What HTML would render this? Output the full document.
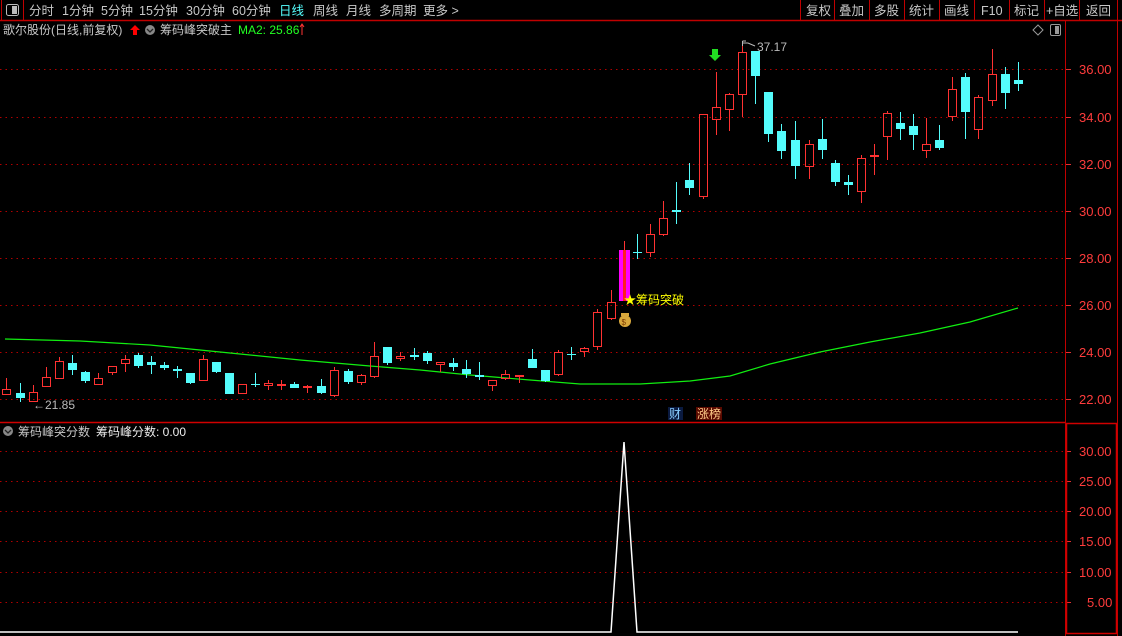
<!DOCTYPE html>
<html><head><meta charset="utf-8"><style>
html,body{margin:0;padding:0;background:#000;width:1122px;height:636px;overflow:hidden}
svg{display:block;font-family:"Liberation Sans","Noto Sans CJK SC",sans-serif}
</style></head><body>
<svg id="s" width="1122" height="636" viewBox="0 0 1122 636" xmlns="http://www.w3.org/2000/svg">
<rect width="1122" height="636" fill="#000"/>
<line x1="0" y1="20.5" x2="1122" y2="20.5" stroke="#c00000" stroke-width="1.5"/>
<line x1="23.5" y1="0" x2="23.5" y2="20" stroke="#c00000"/>
<line x1="1.5" y1="0" x2="1.5" y2="20" stroke="#c00000"/>
<rect x="6.5" y="4.5" width="12" height="11" rx="2" fill="none" stroke="#bbb"/>
<rect x="12" y="6" width="5" height="8" fill="#bbb"/>
<g font-size="12.5" fill="#c8c8c8">
<text x="29" y="15">分时</text><text x="62" y="15">1分钟</text><text x="101" y="15">5分钟</text>
<text x="139" y="15">15分钟</text><text x="186" y="15">30分钟</text><text x="232" y="15">60分钟</text>
<text x="279" y="15" fill="#5ff">日线</text><text x="313" y="15">周线</text><text x="346" y="15">月线</text>
<text x="379" y="15">多周期</text><text x="423" y="15">更多 &gt;</text>
<text x="806" y="15">复权</text><text x="839" y="15">叠加</text><text x="874" y="15">多股</text>
<text x="909" y="15">统计</text><text x="944" y="15">画线</text><text x="981" y="15">F10</text>
<text x="1014" y="15">标记</text><text x="1046" y="15">+自选</text><text x="1086" y="15">返回</text>
</g>
<g stroke="#c00000">
<line x1="800.5" y1="0" x2="800.5" y2="20"/><line x1="834.5" y1="0" x2="834.5" y2="20"/>
<line x1="869.5" y1="0" x2="869.5" y2="20"/><line x1="904.5" y1="0" x2="904.5" y2="20"/>
<line x1="939.5" y1="0" x2="939.5" y2="20"/><line x1="974.5" y1="0" x2="974.5" y2="20"/>
<line x1="1009.5" y1="0" x2="1009.5" y2="20"/><line x1="1044.5" y1="0" x2="1044.5" y2="20"/>
<line x1="1079.5" y1="0" x2="1079.5" y2="20"/><line x1="1117.5" y1="0" x2="1117.5" y2="636"/>
<line x1="1065.5" y1="20" x2="1065.5" y2="636"/>
</g>
<g font-size="12">
<text x="3" y="34" fill="#c8c8c8">歌尔股份(日线,前复权)</text>
<path d="M135 25 L140 30 L137 30 L137 35 L133 35 L133 30 L130 30Z" fill="#f00"/>
<circle cx="150" cy="30" r="5" fill="#888"/><path d="M147 29 L150 32 L153 29" stroke="#222" fill="none" stroke-width="1.3"/>
<text x="160" y="34" fill="#c8c8c8">筹码峰突破主</text>
<text x="238" y="34" fill="#2f2">MA2: 25.86</text>
<path d="M302 24 L302 35 M300 27 L302 24 L304 27" stroke="#f33" fill="none"/>
</g>
<path d="M1038 25 L1043 30 L1038 35 L1033 30Z" fill="none" stroke="#999"/>
<rect x="1050.5" y="24.5" width="10" height="11" rx="1.5" fill="none" stroke="#999"/><rect x="1055" y="26" width="4" height="8" fill="#999"/>
<g stroke="#b00000" stroke-dasharray="1.5 4">
<line x1="0" y1="69.5" x2="1065" y2="69.5"/><line x1="0" y1="117.5" x2="1065" y2="117.5"/>
<line x1="0" y1="164.5" x2="1065" y2="164.5"/><line x1="0" y1="211.5" x2="1065" y2="211.5"/>
<line x1="0" y1="258.5" x2="1065" y2="258.5"/><line x1="0" y1="305.5" x2="1065" y2="305.5"/>
<line x1="0" y1="352.5" x2="1065" y2="352.5"/><line x1="0" y1="399.5" x2="1065" y2="399.5"/>
<line x1="0" y1="451.5" x2="1065" y2="451.5"/><line x1="0" y1="481.5" x2="1065" y2="481.5"/>
<line x1="0" y1="511.5" x2="1065" y2="511.5"/><line x1="0" y1="541.5" x2="1065" y2="541.5"/>
<line x1="0" y1="572.5" x2="1065" y2="572.5"/><line x1="0" y1="602.5" x2="1065" y2="602.5"/>
</g>
<g font-size="13" fill="#ff3c3c">
<text x="1079" y="74">36.00</text><text x="1079" y="122">34.00</text><text x="1079" y="169">32.00</text>
<text x="1079" y="216">30.00</text><text x="1079" y="263">28.00</text><text x="1079" y="310">26.00</text>
<text x="1079" y="357">24.00</text><text x="1079" y="404">22.00</text>
<text x="1079" y="456">30.00</text><text x="1079" y="486">25.00</text><text x="1079" y="516">20.00</text>
<text x="1079" y="546">15.00</text><text x="1079" y="577">10.00</text><text x="1087" y="607">5.00</text>
</g>
<g stroke="#e03030">
<line x1="1066" y1="69.5" x2="1071" y2="69.5"/><line x1="1066" y1="117.5" x2="1071" y2="117.5"/>
<line x1="1066" y1="164.5" x2="1071" y2="164.5"/><line x1="1066" y1="211.5" x2="1071" y2="211.5"/>
<line x1="1066" y1="258.5" x2="1071" y2="258.5"/><line x1="1066" y1="305.5" x2="1071" y2="305.5"/>
<line x1="1066" y1="352.5" x2="1071" y2="352.5"/><line x1="1066" y1="399.5" x2="1071" y2="399.5"/>
<line x1="1066" y1="451.5" x2="1071" y2="451.5"/><line x1="1066" y1="481.5" x2="1071" y2="481.5"/>
<line x1="1066" y1="511.5" x2="1071" y2="511.5"/><line x1="1066" y1="541.5" x2="1071" y2="541.5"/>
<line x1="1066" y1="572.5" x2="1071" y2="572.5"/><line x1="1066" y1="602.5" x2="1071" y2="602.5"/>
</g>
<line x1="0" y1="422.5" x2="1065" y2="422.5" stroke="#d00000" stroke-width="1.5"/>
<rect x="1066.5" y="423.5" width="50" height="210" fill="none" stroke="#d00000" stroke-width="1.5"/>
<circle cx="8" cy="431" r="5" fill="#888"/><path d="M5 430 L8 433 L11 430" stroke="#222" fill="none" stroke-width="1.3"/>
<text x="18" y="436" font-size="12" fill="#c8c8c8">筹码峰突分数</text>
<text x="96" y="436" font-size="12" fill="#eee">筹码峰分数: 0.00</text>
<polyline fill="none" stroke="#1e1" stroke-width="1.2" points="5,339 80,341 150,345 230,353 300,360 370,366 420,370 470,375 530,380 580,384 640,384 690,381 730,376 770,364 820,352 870,342 920,333 970,322 1018,308"/>
<g id="c"></g>
<polyline fill="none" stroke="#fff" stroke-width="1.5" points="0,632 611,632 624,442 637,632 1018,632"/>
<text x="757" y="51" font-size="12" fill="#bbb">37.17</text>
<path d="M742.5 41 L742.5 46 M742.5 41 L746 41 M743 43 L748 43 L755 46" stroke="#bbb" fill="none"/>
<text x="33" y="409" font-size="12" fill="#bbb">←21.85</text>
<path d="M712 49 L718 49 L718 55 L721 55 L715 61 L709 55 L712 55Z" fill="#2d2"/>
<text x="624" y="304" font-size="12" fill="#ff0">★筹码突破</text>
<circle cx="625" cy="321" r="6" fill="#d9a83c"/><rect x="621" y="313" width="8" height="3" fill="#d9a83c"/>
<text x="621.5" y="325" font-size="8" fill="#7a3a00">$</text>
<rect x="668" y="407" width="15" height="13" fill="#0a1a40"/><text x="669" y="418" font-size="12" fill="#8cf">财</text>
<rect x="696" y="407" width="26" height="13" fill="#5a0a00"/><text x="697" y="418" font-size="12" fill="#fc8">涨榜</text>
</svg>
<script>
var d=[[6,'r',389,395,378,395],[20,'c',393,398,383,402],[33,'r',392,402,385,402],[46,'r',377,387,367,387],[59,'r',361,379,357,379],[72,'c',363,370,355,375],[85,'c',372,381,371,383],[98,'r',378,385,373,385],[112,'r',366,373,366,375],[125,'r',359,364,355,372],[138,'c',355,366,353,368],[151,'c',362,365,356,374],[164,'c',365,368,362,370],[177,'c',369,371,366,378],[190,'c',373,383,373,384],[203,'r',359,381,355,381],[216,'c',362,372,362,373],[229,'c',373,394,373,394],[242,'r',384,394,384,394],[255,'c',384,385,373,387],[268,'r',383,386,380,390],[281,'r',384,385,380,390],[294,'c',384,388,382,388],[307,'r',386,388,385,393],[321,'c',386,393,379,394],[334,'r',370,396,367,397],[348,'c',371,382,369,384],[361,'r',375,383,374,385],[374,'r',356,377,342,378],[387,'c',347,363,347,365],[400,'r',356,359,352,361],[414,'c',355,357,348,360],[427,'c',353,361,351,364],[440,'r',362,365,362,372],[453,'c',363,367,358,371],[466,'c',369,374,360,378],[479,'c',375,377,362,380],[492,'r',380,386,380,391],[505,'r',374,379,370,380],[519,'r',375,376,375,383],[532,'c',359,368,349,368],[545,'c',370,381,370,382],[558,'r',352,375,350,376],[571,'c',354,355,347,360],[584,'r',348,352,347,357],[597,'r',312,347,309,350],[611,'r',302,319,290,320],[624,'m',250,301,241,301],[637,'c',252,253,234,259],[650,'r',234,253,224,257],[663,'r',218,235,201,236],[676,'c',210,212,182,224],[689,'c',180,188,163,195],[703,'r',114,197,114,199],[716,'r',107,120,72,135],[729,'r',94,110,93,131],[742,'r',52,95,43,117],[755,'c',51,76,51,104],[768,'c',92,134,92,142],[781,'c',131,151,124,159],[795,'c',140,166,121,179],[809,'r',144,167,140,179],[822,'c',139,150,119,159],[835,'c',163,182,160,186],[848,'c',182,185,175,195],[861,'r',158,192,155,203],[874,'r',155,157,144,175],[887,'r',113,137,111,160],[900,'c',123,129,112,140],[913,'c',126,135,114,150],[926,'r',144,151,118,158],[939,'c',140,148,125,150],[952,'r',89,117,77,121],[965,'c',77,112,73,139],[978,'r',97,130,95,139],[992,'r',74,101,49,106],[1005,'c',74,93,67,109],[1018,'c',80,84,62,91]];
var h='';
d.forEach(function(a){var x=a[0],t=a[1],b1=a[2],b2=Math.max(a[3],a[2]+1),hi=a[4],lo=a[5];
if(t=='c'){h+='<line x1="'+(x+.5)+'" y1="'+hi+'" x2="'+(x+.5)+'" y2="'+lo+'" stroke="#54fcfc"/><rect x="'+(x-4)+'" y="'+b1+'" width="9" height="'+(b2-b1)+'" fill="#54fcfc"/>';}
else if(t=='m'){h+='<line x1="'+(x+.5)+'" y1="'+hi+'" x2="'+(x+.5)+'" y2="'+b1+'" stroke="#ff3232"/><rect x="'+(x-5)+'" y="'+b1+'" width="11" height="'+(b2-b1)+'" fill="#ff00ff"/><rect x="'+(x-1)+'" y="'+b1+'" width="3" height="'+(b2-b1)+'" fill="#ff2020"/>';}
else{h+='<line x1="'+(x+.5)+'" y1="'+hi+'" x2="'+(x+.5)+'" y2="'+b1+'" stroke="#ff3232"/><line x1="'+(x+.5)+'" y1="'+b2+'" x2="'+(x+.5)+'" y2="'+lo+'" stroke="#ff3232"/><rect x="'+(x-3.5)+'" y="'+(b1+.5)+'" width="8" height="'+(b2-b1-1<1?1:b2-b1-1)+'" fill="none" stroke="#ff3232"/>';}});
document.getElementById('c').innerHTML=h;
</script>
</body></html>
